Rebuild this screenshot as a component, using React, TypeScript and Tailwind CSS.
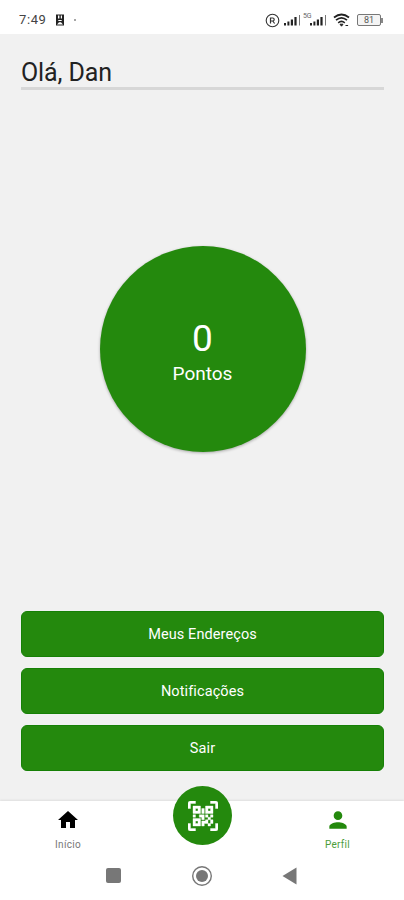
import React from "react";

const actions = ["Meus Endereços", "Notificações", "Sair"];

function Signal() {
  return (
    <svg width="18" height="12" viewBox="0 0 18 12" fill="#222">
      <rect x="0" y="9" width="2" height="2.5" />
      <rect x="3.4" y="7.5" width="2" height="4" />
      <rect x="6.8" y="5.5" width="2.2" height="6" />
      <rect x="10.4" y="3" width="2.2" height="8.5" />
      <rect x="15" y="1" width="1" height="10.5" fill="#777" />
    </svg>
  );
}

function StatusBar() {
  return (
    <header className="flex h-[34px] shrink-0 items-center bg-white pt-[6px] pr-[21px] pl-[19px] text-[#444]">
      <span className="w-[28px] text-[13px] leading-4 tracking-[0.6px] whitespace-nowrap">7:49</span>
      <svg className="ml-[8px]" width="10" height="12" viewBox="0 0 10 12">
        <rect x="1" y="0.5" width="8" height="11" fill="#222" />
        <path d="M3 1.5h1.4v3H3zM5.8 1.5h1.2v3H5.8zM3.3 6h3.4v1H3.3zM2 10.5l2-2.2h2l2 2.2z" fill="#fff" />
      </svg>
      <span className="ml-[9px] size-[2px] rounded-full bg-[#888]" />
      <div className="ml-auto flex items-center">
        <svg width="15" height="15" viewBox="0 0 15 15" fill="none" stroke="#333">
          <circle cx="7.5" cy="7.5" r="6.3" strokeWidth="1.1" />
          <path d="M5.5 10.5V5h2.2a1.5 1.5 0 0 1 0 3H5.5M7.8 8l1.8 2.5" strokeWidth="1.2" />
        </svg>
        <span className="ml-[4px]"><Signal /></span>
        <span className="-mt-[8px] ml-[1px] w-[8px] text-[7px] leading-[7px] tracking-[-0.3px] text-[#666]">5G</span>
        <span className="-ml-[1px]"><Signal /></span>
        <svg className="ml-[5px]" width="17" height="14" viewBox="0 0 17 14" fill="none" stroke="#222">
          <path d="M1 4.5Q8.5 -1.5 16 4.5" strokeWidth="1.8" />
          <path d="M3 7.2Q8.5 2.5 14 7.2" strokeWidth="1.7" />
          <path d="M5.2 9.8Q8.5 7 11.8 9.8" strokeWidth="1.6" />
          <path d="M7 11.2h3l-1.5 2zM12.5 12.5h2.6" strokeWidth="1" fill="#222" />
        </svg>
        <div className="ml-[7px] flex h-[12px] w-[24px] items-center justify-center rounded-[2px] border border-[#777] bg-[#f4f4f4] text-[9px] leading-none text-[#555]">
          81
        </div>
        <span className="h-[5px] w-[2px] bg-[#888]" />
      </div>
    </header>
  );
}

function ScanButton() {
  return (
    <button className="-mt-[15px] flex size-[59px] items-center justify-center rounded-full bg-[#24890d]">
      <svg width="30" height="30" viewBox="0 0 24 24" fill="#fff" stroke="#fff" strokeWidth="0.3">
        <path d="M4,4H10V10H4V4M20,4V10H14V4H20M14,15H16V13H14V11H16V13H18V11H20V13H18V15H20V18H18V20H16V18H13V20H11V16H14V15M16,15V18H18V15H16M4,20V14H10V20H4M6,6V8H8V6H6M16,6V8H18V6H16M6,16V18H8V16H6M4,11H6V13H4V11M9,11H13V15H11V13H9V11M11,6H13V10H11V6M2,2V6H0V2A2,2 0 0,1 2,0H6V2H2M22,0A2,2 0 0,1 24,2V6H22V2H18V0H22M2,18V22H6V24H2A2,2 0 0,1 0,22V18H2M22,22V18H24V22A2,2 0 0,1 22,24H18V22H22Z" />
      </svg>
    </button>
  );
}

export default function App() {
  return (
    <div className="flex h-[900px] w-[404px] flex-col overflow-hidden bg-[#f1f1f1] font-['Roboto',sans-serif]">
      <StatusBar />
      <main className="flex flex-1 flex-col px-[21px]">
        <h1 className="mt-[23px] h-[33px] w-[363px] border-b-[3px] border-[#d7d7d7] text-[25px] leading-[31px] tracking-[-0.1px] text-[#222]">
          Olá, Dan
        </h1>
        <section className="mt-[156px] ml-[78.5px] flex size-[206px] shrink-0 flex-col items-center justify-center rounded-full bg-[#24890d] text-white shadow-[0_1px_3px_rgba(0,0,0,0.3)]">
          <span className="mt-[7px] text-[37px] leading-[40px]">0</span>
          <span className="mt-[3px] text-[19px] leading-[24px]">Pontos</span>
        </section>
        <div className="mt-auto mb-[30.5px] flex flex-col gap-[11px]">
          {actions.map((label) => (
            <button
              key={label}
              className="h-[46px] w-[363px] rounded-[6px] border border-[#168006] bg-[#24890d] pt-[3px] text-[14.5px] tracking-[0.1px] text-white"
            >
              {label}
            </button>
          ))}
        </div>
      </main>
      <nav className="flex h-[53px] shrink-0 items-start justify-center bg-white pl-[1px] shadow-[0_-1px_2px_rgba(0,0,0,0.08)]">
        <a className="flex w-[135px] flex-col items-center pt-[7px]">
          <svg className="-ml-px" width="24" height="24" viewBox="0 0 24 24" fill="#000">
            <path d="M10 20v-6h4v6h5v-8h3L12 3 2 12h3v8z" />
          </svg>
          <span className="mt-[7px] text-[10px] leading-[12px] tracking-[0.3px] text-[#777]">Início</span>
        </a>
        <div className="flex w-[136px] justify-center">
          <ScanButton />
        </div>
        <a className="flex w-[135px] flex-col items-center pt-[6px]">
          <svg className="ml-px" width="26" height="26" viewBox="0 0 24 24" fill="#24890d">
            <path d="M12 12c2.21 0 4-1.79 4-4s-1.79-4-4-4-4 1.79-4 4 1.79 4 4 4zm0 2c-2.67 0-8 1.34-8 4v2h16v-2c0-2.66-5.33-4-8-4z" />
          </svg>
          <span className="mt-[6px] ml-px text-[10px] leading-[12px] tracking-[0.3px] text-[#4b9d39]">Perfil</span>
        </a>
      </nav>
      <footer className="flex h-[46px] shrink-0 items-start bg-white pt-[11px] pl-[106px]">
        <span className="mt-[3px] size-[15px] rounded-[2px] bg-[#777]" />
        <svg className="ml-[70px]" width="22" height="22" viewBox="0 0 22 22">
          <circle cx="11" cy="11" r="9.3" fill="none" stroke="#777" strokeWidth="1.4" />
          <circle cx="11" cy="11" r="6" fill="#777" />
        </svg>
        <svg className="mt-[2px] ml-[69px]" width="15" height="18" viewBox="0 0 15 18">
          <path d="M.5 9L14.5 .5v17z" fill="#777" />
        </svg>
      </footer>
    </div>
  );
}
